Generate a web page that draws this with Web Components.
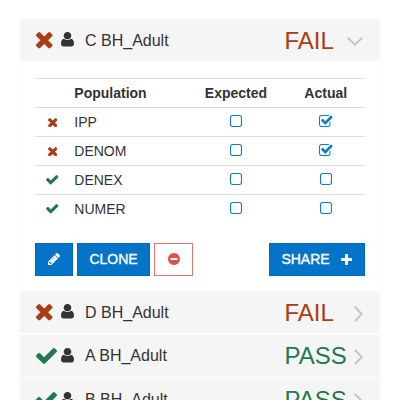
<!DOCTYPE html>
<html lang="en">
<head>
<meta charset="utf-8">
<title>Patients</title>
<style>
html, body { margin: 0; background: #fff; }
body { height: 400px; overflow: hidden; font: 14px/20px "Liberation Sans", Arial, sans-serif; color: #333; }
</style>
</head>
<body>
<patient-list>
  <patient-row status="fail" name="C BH_Adult" open></patient-row>
  <patient-detail>
    <population-table></population-table>
    <button-bar>
      <action-button style="width:38px"><ui-icon name="pencil" w="12" h="12"></ui-icon></action-button>
      <action-button style="width:73px">CLONE</action-button>
      <action-button danger style="width:39px"><ui-icon name="minus" w="12" h="12"></ui-icon></action-button>
      <action-button style="width:96px;margin-left:auto;gap:11px">SHARE<ui-icon name="plus" w="11" h="11"></ui-icon></action-button>
    </button-bar>
  </patient-detail>
  <patient-row status="fail" name="D BH_Adult"></patient-row>
  <patient-row status="pass" name="A BH_Adult"></patient-row>
  <patient-row status="pass" name="B BH_Adult"></patient-row>
</patient-list>
<script>
// Each icon: viewBox trimmed to the glyph, then its path.
const ICONS = {
  times: ['302 366 1188 1188', 'M1490 1322q0 40-28 68l-136 136q-28 28-68 28t-68-28l-294-294-294 294q-28 28-68 28t-68-28l-136-136q-28-28-28-68t28-68l294-294-294-294q-28-28-28-68t28-68l136-136q28-28 68-28t68 28l294 294 294-294q28-28 68-28t68 28l136 136q28 28 28 68t-28 68l-294 294 294 294q28 28 28 68z'],
  check: ['121 334 1550 1188', 'M1671 566q0 40-28 68l-724 724-136 136q-28 28-68 28t-68-28l-136-136-362-362q-28-28-28-68t28-68l136-136q28-28 68-28t68 28l294 295 656-657q28-28 68-28t68 28l136 136q28 28 28 68z'],
  user: ['0 0 13 14.5', 'M6.5 0A3.7 3.7 0 0 1 9.2 6.3C8.2 7.6 4.8 7.6 3.8 6.3A3.7 3.7 0 0 1 6.5 0zM3.2 6.7C4.5 8.4 8.5 8.4 9.8 6.7 12 6.9 13 8.6 13 11.6 13 13.4 12 14.5 10.3 14.5H2.7C1 14.5 0 13.4 0 11.6 0 8.6 1 6.9 3.2 6.7z'],
  pencil: ['128 149 1515 1515', 'M491 1536l91-91-235-235-91 91v107h128v128h107zm523-928q0-22-22-22-10 0-17 7l-542 542q-7 7-7 17 0 22 22 22 10 0 17-7l542-542q7-7 7-17zm-54-192l416 416-832 832h-416v-416zm683 96q0 53-37 90l-166 166-416-416 166-165q36-38 90-38 53 0 91 38l235 234q37 39 37 91z'],
  minus: ['128 128 1536 1536', 'M1344 960v-128q0-26-19-45t-45-19h-768q-26 0-45 19t-19 45v128q0 26 19 45t45 19h768q26 0 45-19t19-45zm320-64q0 209-103 385.5t-279.5 279.5-385.5 103-385.5-103-279.5-279.5-103-385.5 103-385.5 279.5-279.5 385.5-103 385.5 103 279.5 279.5 103 385.5z'],
  plus: ['192 128 1408 1408', 'M1600 736v192q0 40-28 68t-68 28h-416v416q0 40-28 68t-68 28h-192q-40 0-68-28t-28-68v-416h-416q-40 0-68-28t-28-68v-192q0-40 28-68t68-28h416v-416q0-40 28-68t68-28h192q40 0 68 28t28 68v416h416q40 0 68 28t28 68z'],
  square: ['192 128 1408 1408', 'M1312 256h-832q-66 0-113 47t-47 113v832q0 66 47 113t113 47h832q66 0 113-47t47-113v-832q0-66-47-113t-113-47zm288 160v832q0 119-84.5 203.5t-203.5 84.5h-832q-119 0-203.5-84.5t-84.5-203.5v-832q0-119 84.5-203.5t203.5-84.5h832q119 0 203.5 84.5t84.5 203.5z'],
  checked: ['64 128 1664 1408', 'M1472 930v318q0 119-84.5 203.5t-203.5 84.5h-832q-119 0-203.5-84.5t-84.5-203.5v-832q0-119 84.5-203.5t203.5-84.5h832q63 0 117 25 15 7 18 23 3 17-9 29l-49 49q-10 10-23 10-3 0-9-2-23-6-45-6h-832q-66 0-113 47t-47 113v832q0 66 47 113t113 47h832q66 0 113-47t47-113v-254q0-13 9-22l64-64q10-10 23-10 6 0 12 3 20 8 20 29zm231-489l-814 814q-24 24-57 24t-57-24l-430-430q-24-24-24-57t24-57l110-110q24-24 57-24t57 24l263 263 647-647q24-24 57-24t57 24l110 110q24 24 24 57t-24 57z'],
  down: ['0 0 16 9', 'M0 1.6 1.5.1 8 6.3 14.5.1 16 1.6 8 9z'],
  right: ['0 0 9 16', 'M1.6 0 .1 1.5 6.3 8 .1 14.5 1.6 16 9 8z']
};
const define = (tag, render) => customElements.define(tag, class extends HTMLElement {
  constructor() { super(); this.attachShadow({ mode: 'open' }); }
  connectedCallback() { this.shadowRoot.innerHTML = render(this); }
});
const icon = (name, w, h) => `<ui-icon name="${name}" w="${w}" h="${h}"></ui-icon>`;

define('ui-icon', el => {
  const [box, path] = ICONS[el.getAttribute('name')];
  return `<style>:host{display:block;flex:none}svg{display:block;fill:currentColor}</style>
    <svg width="${el.getAttribute('w')}" height="${el.getAttribute('h')}" viewBox="${box}" preserveAspectRatio="none"><path d="${path}"/></svg>`;
});

define('patient-list', () => `<style>
  :host{display:block;box-sizing:border-box;width:362px;height:381px;overflow:hidden;margin:19px 0 0 19px;border:solid #fafafa;border-width:0 1px}
  </style><slot></slot>`);

define('patient-row', el => {
  const pass = el.getAttribute('status') === 'pass';
  const open = el.hasAttribute('open');
  return `<style>
    :host{display:grid;grid-template-columns:25px 24.5px 199px 1fr auto;align-items:center;box-sizing:border-box;
      height:42.4px;margin-bottom:1.3px;padding:0 16px;width:359px;background:#f5f5f5;font-size:16px}
    :host([open]){margin-bottom:0}
    .tone{color:${pass ? '#23784e' : '#ab3c13'}}
    .mark{padding-top:1px}
    .user{padding-bottom:1px}
    .name{padding-top:1px;margin-left:-.5px}
    .result{font-size:24px;line-height:28px;padding-top:1px}
    .arrow{color:#c6c6c6;padding-top:${open ? 2 : 3}px}
  </style>
  <div class="mark tone">${pass ? icon('check', 21, 16) : icon('times', 16.5, 16.5)}</div>
  <div class="user">${icon('user', 13, 14.5)}</div>
  <span class="name">${el.getAttribute('name')}</span>
  <span class="result tone">${pass ? 'PASS' : 'FAIL'}</span>
  <div class="arrow">${open ? icon('down', 16, 9) : icon('right', 9, 16)}</div>`;
});

define('patient-detail', () => `<style>
  :host{display:block;box-sizing:border-box;width:359px;height:229.5px;padding:16.5px 14.5px 0 15px}
  </style><slot></slot>`);

define('population-table', () => {
  const rows = [['IPP', 0, 1], ['DENOM', 0, 1], ['DENEX', 1, 0], ['NUMER', 1, 0]];
  return `<style>
    :host{display:block}
    .row{display:grid;grid-template-columns:39.3px 116.7px 90px 1fr;align-items:center;height:28px;border-top:1px solid #ddd}
    .head{font-weight:bold}
    .c{display:flex;justify-content:center}
    .x{color:#ab3c13;padding:1px 4px 0 0}.v{color:#23784e;padding:0 4px 0 0}
    .box{color:#0c7cc8;padding-bottom:1px}
    .box:last-child,.head .c:last-child{padding-left:6px}
  </style>
  <div class="row head"><span></span><span>Population</span><span class="c">Expected</span><span class="c">Actual</span></div>
  ${rows.map(([n, ok, a]) => `<div class="row">
    <div class="c ${ok ? 'v' : 'x'}">${ok ? icon('check', 12.4, 9.5) : icon('times', 9.5, 9.5)}</div>
    <span>${n}</span>
    <div class="c box">${icon('square', 12, 12)}</div>
    <div class="c box">${a ? icon('checked', 13.6, 12) : icon('square', 12, 12)}</div></div>`).join('')}`;
});

define('button-bar', () => `<style>
  :host{display:flex;gap:4px;margin-top:20px}
  </style><slot></slot>`);

define('action-button', () => `<style>
  :host{display:flex;align-items:center;justify-content:center;box-sizing:border-box;height:33px;
    background:#0374c8;border:1px solid #0568b3;color:#fff;-webkit-text-stroke:.35px #fff}
  :host([danger]){background:#fff;border-color:#df7775;color:#d9534f}
  </style><slot></slot>`);
</script>
</body>
</html>
